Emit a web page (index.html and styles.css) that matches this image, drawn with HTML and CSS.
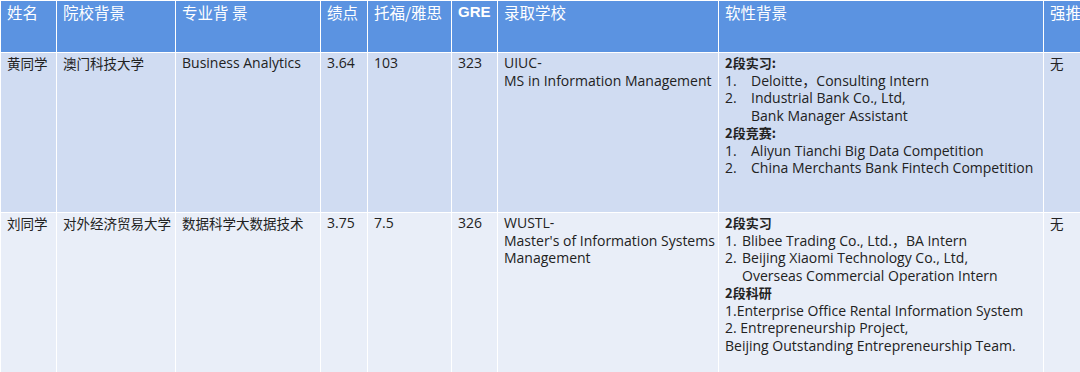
FILE: index.html
```html
<!DOCTYPE html>
<html lang="zh">
<head>
<meta charset="utf-8">
<link rel="stylesheet" href="styles.css">
</head>
<body>
<table class="cases">
  <colgroup>
    <col class="c-name"><col class="c-school"><col class="c-major"><col class="c-gpa"><col class="c-lang"><col class="c-gre"><col class="c-admit"><col class="c-soft"><col class="c-rec">
  </colgroup>
  <thead>
    <tr>
      <th>姓名</th><th>院校背景</th><th>专业背 景</th><th>绩点</th><th>托福/雅思</th><th class="en">GRE</th><th>录取学校</th><th>软性背景</th><th>强推</th>
    </tr>
  </thead>
  <tbody>
    <tr class="r1">
      <td class="cn">黄同学</td>
      <td class="cn">澳门科技大学</td>
      <td>Business Analytics</td>
      <td>3.64</td>
      <td>103</td>
      <td>323</td>
      <td class="admit">UIUC-<br>MS in Information Management</td>
      <td>
        <div class="sec">2段实习:</div>
        <div class="li wide"><span class="n">1.</span><span>Deloitte，Consulting Intern</span></div>
        <div class="li wide"><span class="n">2.</span><span>Industrial Bank Co., Ltd,<br>Bank Manager Assistant</span></div>
        <div class="sec">2段竞赛:</div>
        <div class="li wide"><span class="n">1.</span><span>Aliyun Tianchi Big Data Competition</span></div>
        <div class="li wide"><span class="n">2.</span><span>China Merchants Bank Fintech Competition</span></div>
      </td>
      <td class="cn">无</td>
    </tr>
    <tr class="r2">
      <td class="cn">刘同学</td>
      <td class="cn">对外经济贸易大学</td>
      <td class="cn">数据科学大数据技术</td>
      <td>3.75</td>
      <td>7.5</td>
      <td>326</td>
      <td class="admit">WUSTL-<br>Master's of Information Systems<br>Management</td>
      <td>
        <div class="sec">2段实习</div>
        <div class="li"><span class="n">1.</span><span>Blibee Trading Co., Ltd.，BA Intern</span></div>
        <div class="li"><span class="n">2.</span><span>Beijing Xiaomi Technology Co., Ltd,<br>Overseas Commercial Operation Intern</span></div>
        <div class="sec">2段科研</div>
        <div class="ln">1.Enterprise Office Rental Information System</div>
        <div class="ln">2. Entrepreneurship Project,</div>
        <div class="ln">Beijing Outstanding Entrepreneurship Team.</div>
      </td>
      <td class="cn">无</td>
    </tr>
  </tbody>
</table>
</body>
</html>
```

FILE: styles.css
```css
html, body {
  margin: 0;
  padding: 0;
  background: #ffffff;
}
body {
  width: 1080px;
  height: 372px;
  overflow: hidden;
}
.cases {
  border-collapse: collapse;
  table-layout: fixed;
  width: 1100px;
  font-family: "Open Sans", "Noto Sans CJK SC", sans-serif;
  font-size: 14px;
  color: #222;
}
.c-name { width: 56px; }
.c-school { width: 119px; }
.c-major { width: 145px; }
.c-gpa { width: 47px; }
.c-lang { width: 84px; }
.c-gre { width: 46px; }
.c-admit { width: 221px; }
.c-soft { width: 325px; }
.c-rec { width: 57px; }
th, td {
  border: 1px solid #ffffff;
  text-align: left;
  vertical-align: top;
  padding: 3px 6px 0 6px;
}
th {
  background: #5b93e1;
  color: #ffffff;
  font-family: "Noto Sans CJK SC", sans-serif;
  font-weight: 400;
  font-size: 15.5px;
  height: 50px;
  white-space: nowrap;
  line-height: 20px;
  padding-top: 1px;
}
th.en {
  font-family: "Liberation Sans", sans-serif;
  font-weight: 700;
  font-size: 15px;
}
.r1 td { background: #d0dcf2; height: 157px; }
.r2 td { background: #e9eef8; height: 170px; }
td { line-height: 17.5px; padding-top: 1px; }
td.admit {
  white-space: nowrap;
  padding-right: 0;
}
td.cn {
  white-space: nowrap;
  font-family: "Noto Sans CJK SC", sans-serif;
  font-size: 13.5px;
  padding-top: 2px;
}
.sec {
  font-weight: 700;
  font-family: "Noto Sans CJK SC", sans-serif;
  font-size: 13px;
}
.li {
  display: flex;
}
.li .n {
  flex: 0 0 17px;
}
.li.wide .n {
  flex-basis: 26px;
}
```
